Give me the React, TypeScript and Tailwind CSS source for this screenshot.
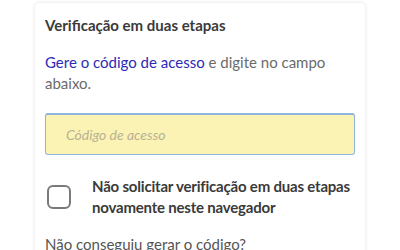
import React, { useState } from 'react';

export default function App() {
  const [code, setCode] = useState('');
  const [remember, setRemember] = useState(false);

  return (
    <div className="w-[400px] h-[250px] overflow-hidden bg-white" style={{ fontFamily: 'Lato, "Open Sans", sans-serif' }}>
      <div className="mx-[35px] mt-[3px] bg-white rounded-sm shadow-[0_0_4px_rgba(0,0,0,0.12)] px-[10px] pt-[12px] pb-4">
        <h2 className="text-[15px] leading-[20px] font-bold text-[#3a3a3a]">Verificação em duas etapas</h2>

        <p className="mt-[17px] text-[15px] leading-[21px] text-[#6b6b6b]">
          <a href="#" className="text-[#2b2bb5]">Gere o código de acesso</a> e digite no campo abaixo.
        </p>

        <input
          value={code}
          onChange={e => setCode(e.target.value)}
          placeholder="Código de acesso"
          className="mt-[19px] w-full h-[42px] px-5 bg-[#fbf3b3] border border-[#8fb4dc] border-t-2 rounded-[3px] text-[14px] italic text-[#444] placeholder:text-[#b8b196] outline-none"
        />

        <label className="mt-[21px] flex items-center gap-[21px] pl-[2px] -mr-[6px] cursor-pointer">
          <input
            type="checkbox"
            checked={remember}
            onChange={e => setRemember(e.target.checked)}
            className="appearance-none shrink-0 w-6 h-6 rounded-md border-2 border-[#7a7a7a] bg-white"
          />
          <span className="text-[15px] leading-[21px] font-bold tracking-[-0.2px] text-[#3a3a3a]">
            Não solicitar verificação em duas etapas novamente neste navegador
          </span>
        </label>

        <p className="mt-[16px] text-[15px] leading-[21px] text-[#555]">Não conseguiu gerar o código?</p>
      </div>
    </div>
  );
}
